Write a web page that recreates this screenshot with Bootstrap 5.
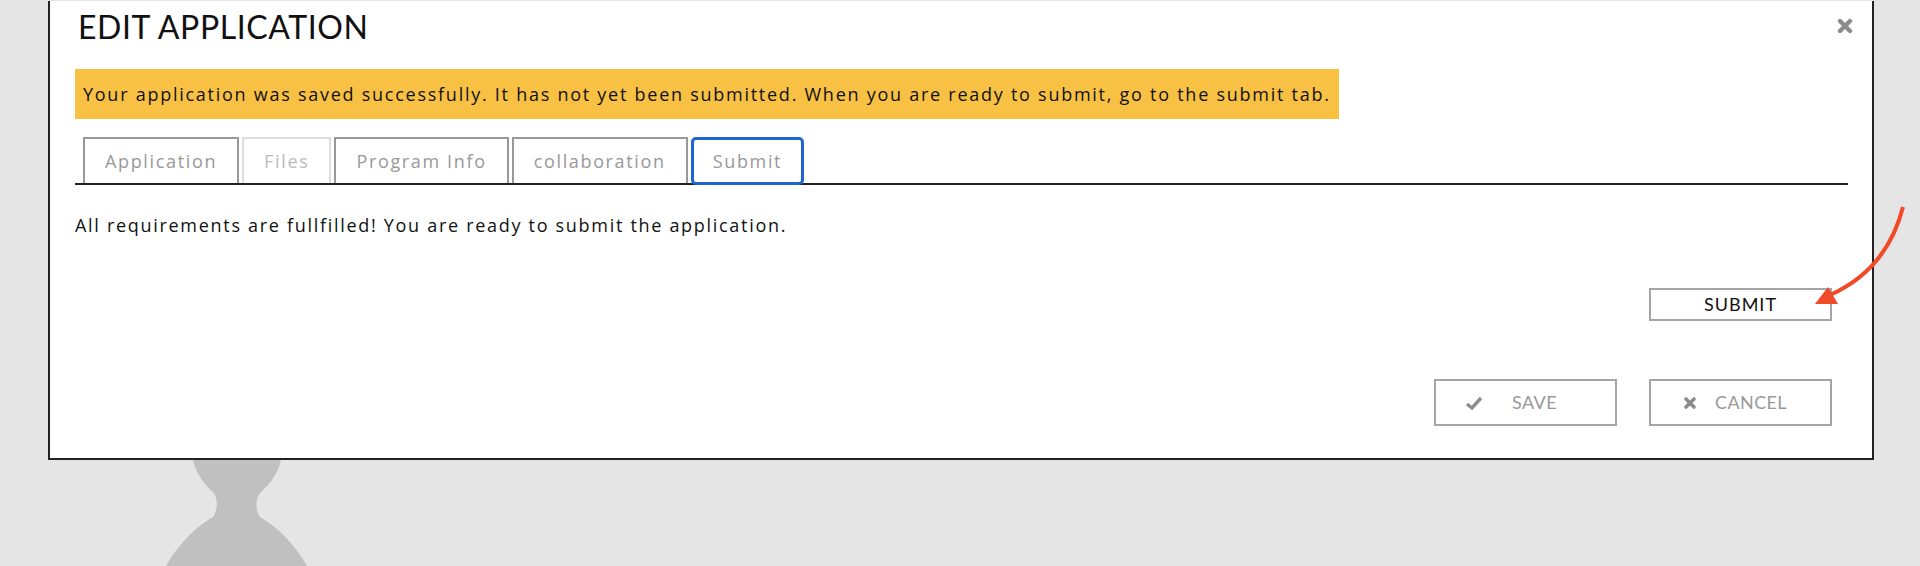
<!DOCTYPE html>
<html lang="en">
<head>
  <meta charset="UTF-8" />
  <title>Edit Application</title>
  <link href="https://cdn.jsdelivr.net/npm/bootstrap@5.3.3/dist/css/bootstrap.min.css" rel="stylesheet">
  <style>
    html, body { height: 566px; overflow: hidden; }
    body { background: #e5e5e5; font-family: "Open Sans", sans-serif; font-size: 18px; letter-spacing: 1.7px; color: #111; }
    .avatar-bg { position: absolute; left: 166px; top: 440px; width: 141px; height: 126px; }
    .pointer-arrow { position: absolute; left: 1800px; top: 200px; width: 110px; height: 115px; }
    .app-panel { position: relative; margin: 0 46px 0 48px; top: 1px; height: 459px; background: #fff; border: 2px solid #222; border-top: 0; padding: 7px 24px 0 25px; }
    .app-title { font-family: Lato, sans-serif; font-size: 32px; font-weight: 400; letter-spacing: .6px; color: #111; margin: 0 0 0 3px; line-height: 38px; }
    .close-x { position: absolute; right: 19px; top: 17px; width: 16px; height: 16px; padding: 0; border: 0; background: none; display: flex; }
    .notice { background: #f8c144; color: #111; height: 50px; width: 1264px; margin: 23px 0 18px 0; padding: 0 8px; border: 0; border-radius: 0; letter-spacing: 1.74px; }
    .app-tabs { border-bottom: 2px solid #222; padding-left: 8px; gap: 3px; height: 48px; flex-wrap: nowrap; letter-spacing: 1.65px; }
    .app-tabs .nav-link { height: 46px; margin: 0; padding: 0 20px; display: flex; align-items: center; background: #fff; color: #999; border: 2px solid #999; border-bottom: 0; border-radius: 0; }
    .app-tabs .nav-link.disabled { color: #bbb; border-color: #ddd; }
    .app-tabs .nav-link.focused { border: 3px solid #1f64d1; border-radius: 5px; height: 48px; padding: 0 19px; position: relative; }
    .req-text { margin: 28px 0 0; line-height: 24px; }
    .action-btn { width: 183px; border: 2px solid #a5a5a5; border-radius: 0; background: #fff; font-family: Lato, sans-serif; font-size: 18px; text-transform: uppercase; padding: 0; }
    .submit-btn { height: 33px; color: #111; letter-spacing: 1px; margin-top: 51px; }
    .foot-btn { height: 47px; color: #999; letter-spacing: .4px; }
    .save-btn { padding-left: 29px; gap: 29px; }
    .cancel-btn { padding-left: 32px; gap: 18px; }
    .btn-row { padding-right: 16px; }
    .foot-row { margin-top: 58px; gap: 32px; }
  </style>
</head>
<body>

  <!-- silhouette behind the dialog -->
  <svg class="avatar-bg" viewBox="0 0 141 126">
    <path fill="#c0c0c0" d="M26 10 C26 30 38 44 47 52 C52 58 52 70 47 77 C28 88 12 105 0 126 L141 126 C129 105 113 88 94 77 C89 70 89 58 95 52 C104 44 116 30 116 10 Z"/>
  </svg>

  <div class="app-panel">
    <button class="close-x" type="button" aria-label="Close">
      <svg viewBox="0 0 16 16" width="16" height="16"><path d="M3 3 L13 13 M13 3 L3 13" stroke="#8c8c8c" stroke-width="4.4" stroke-linecap="round"/></svg>
    </button>

    <h4 class="app-title">EDIT APPLICATION</h4>

    <div class="alert notice d-flex align-items-center">Your application was saved successfully. It has not yet been submitted. When you are ready to submit, go to the submit tab.</div>

    <ul class="nav nav-tabs app-tabs">
      <li class="nav-item"><a class="nav-link" href="#">Application</a></li>
      <li class="nav-item"><a class="nav-link disabled" href="#">Files</a></li>
      <li class="nav-item"><a class="nav-link" href="#">Program Info</a></li>
      <li class="nav-item"><a class="nav-link" href="#">collaboration</a></li>
      <li class="nav-item"><a class="nav-link focused" href="#">Submit</a></li>
    </ul>

    <p class="req-text">All requirements are fullfilled! You are ready to submit the application.</p>

    <div class="d-flex justify-content-end btn-row">
      <button class="btn action-btn submit-btn" type="button">Submit</button>
    </div>

    <div class="d-flex justify-content-end btn-row foot-row">
      <button class="btn action-btn foot-btn save-btn d-flex align-items-center" type="button">
        <svg viewBox="0 0 18 16" width="18" height="16"><path d="M2 9 L7 13 L16 3" fill="none" stroke="#8c8c8c" stroke-width="3.4"/></svg>
        Save
      </button>
      <button class="btn action-btn foot-btn cancel-btn d-flex align-items-center" type="button">
        <svg viewBox="0 0 14 14" width="14" height="14"><path d="M3 3 L11 11 M11 3 L3 11" stroke="#8c8c8c" stroke-width="3.6" stroke-linecap="round"/></svg>
        Cancel
      </button>
    </div>
  </div>

  <!-- annotation arrow drawn over the screenshot -->
  <svg class="pointer-arrow" viewBox="0 0 110 115">
    <path d="M103 7 C92 50 68 78 30 95" fill="none" stroke="#f04a26" stroke-width="4"/>
    <polygon fill="#f04a26" points="15,104 28,87 38,104"/>
  </svg>

</body>
</html>
